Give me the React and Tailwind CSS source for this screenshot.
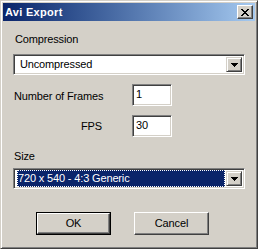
import React from 'react';

const font = { fontFamily: '"Liberation Sans", Arial, sans-serif' };

function DropArrow() {
  return (
    <div className="w-[16px] h-full bg-[#d4d0c8] border border-t-[#d4d0c8] border-l-[#d4d0c8] border-b-[#404040] border-r-[#404040] shadow-[inset_1px_1px_0_#ffffff,inset_-1px_-1px_0_#808080] flex items-center justify-center">
      <svg width="7" height="4" viewBox="0 0 7 4" shapeRendering="crispEdges">
        <path d="M0 0h7v1H0zM1 1h5v1H1zM2 2h3v1H2zM3 3h1v1H3z" fill="#000" />
      </svg>
    </div>
  );
}

function Combo({ value, selected }) {
  return (
    <div className="h-[21px] w-[232px] bg-white border border-t-[#808080] border-l-[#808080] border-b-white border-r-white shadow-[inset_1px_1px_0_#404040,inset_-1px_-1px_0_#d4d0c8] p-[2px] pl-[2px] flex">
      <div className="flex-1 pl-[1px] pr-[1px] flex items-center">
        {selected ? (
          <div className="h-[17px] w-full bg-[#0a246a] text-white outline outline-1 outline-dotted outline-[#ffffff] -outline-offset-1 flex items-center pl-[1px]">
            {value}
          </div>
        ) : (
          <div className="pl-[3px] text-black">{value}</div>
        )}
      </div>
      <DropArrow />
    </div>
  );
}

function Field({ value }) {
  return (
    <div className="h-[22px] w-[40px] bg-white border border-t-[#808080] border-l-[#808080] border-b-white border-r-white shadow-[inset_1px_1px_0_#404040,inset_-1px_-1px_0_#d4d0c8] pl-[3px] pt-[3px] leading-[13px]">
      {value}
    </div>
  );
}

function Button({ label, isDefault }) {
  if (isDefault) {
    return (
      <div className="w-[75px] h-[23px] border border-black">
        <div className="w-full h-full border border-t-white border-l-white border-b-[#404040] border-r-[#404040] shadow-[inset_-1px_-1px_0_#808080] flex items-center justify-center">
          {label}
        </div>
      </div>
    );
  }
  return (
    <div className="w-[75px] h-[23px] border border-t-white border-l-white border-b-[#404040] border-r-[#404040] shadow-[inset_-1px_-1px_0_#808080] flex items-center justify-center">
      {label}
    </div>
  );
}

export default function App() {
  return (
    <div
      style={font}
      className="w-[258px] h-[249px] bg-[#d4d0c8] border border-t-[#d4d0c8] border-l-[#d4d0c8] border-b-[#404040] border-r-[#404040] shadow-[inset_1px_1px_0_#ffffff,inset_-1px_-1px_0_#808080] p-[2px] text-[11px] leading-[13px] tracking-[-0.15px] text-black"
    >
      {/* Title bar */}
      <div className="h-[18px] bg-gradient-to-r from-[#0a246a] to-[#a6caf0] flex items-center justify-between pl-[2px] pr-[2px]">
        <span className="text-white font-bold text-[11px] tracking-[0.3px]">Avi Export</span>
        <div className="w-[16px] h-[14px] bg-[#d4d0c8] border border-t-white border-l-white border-b-[#404040] border-r-[#404040] shadow-[inset_-1px_-1px_0_#808080] flex items-center justify-center">
          <svg width="8" height="7" viewBox="0 0 8 7" shapeRendering="crispEdges">
            <path d="M0 0h2v1H0zM6 0h2v1H6zM1 1h2v1H1zM5 1h2v1H5zM2 2h4v1H2zM3 3h2v1H3zM2 4h4v1H2zM1 5h2v1H1zM5 5h2v1H5zM0 6h2v1H0zM6 6h2v1H6z" fill="#000" />
          </svg>
        </div>
      </div>

      <div className="pl-[10px] flex flex-col">
        <div className="mt-[12px] pl-[2px]">Compression</div>
        <div className="mt-[8px]">
          <Combo value="Uncompressed" />
        </div>

        <div className="mt-[9px] flex">
          <div className="w-[119px] pl-[1px] pt-[6px]">Number of Frames</div>
          <Field value="1" />
        </div>
        <div className="mt-[9px] flex">
          <div className="w-[119px] pl-[68px] pt-[5px]">FPS</div>
          <Field value="30" />
        </div>

        <div className="mt-[13px] pl-[1px]">Size</div>
        <div className="mt-[5px]">
          <Combo value="720 x 540 - 4:3 Generic" selected />
        </div>

        <div className="mt-[23px] pl-[23px] flex gap-[23px]">
          <Button label="OK" isDefault />
          <Button label="Cancel" />
        </div>
      </div>
    </div>
  );
}
